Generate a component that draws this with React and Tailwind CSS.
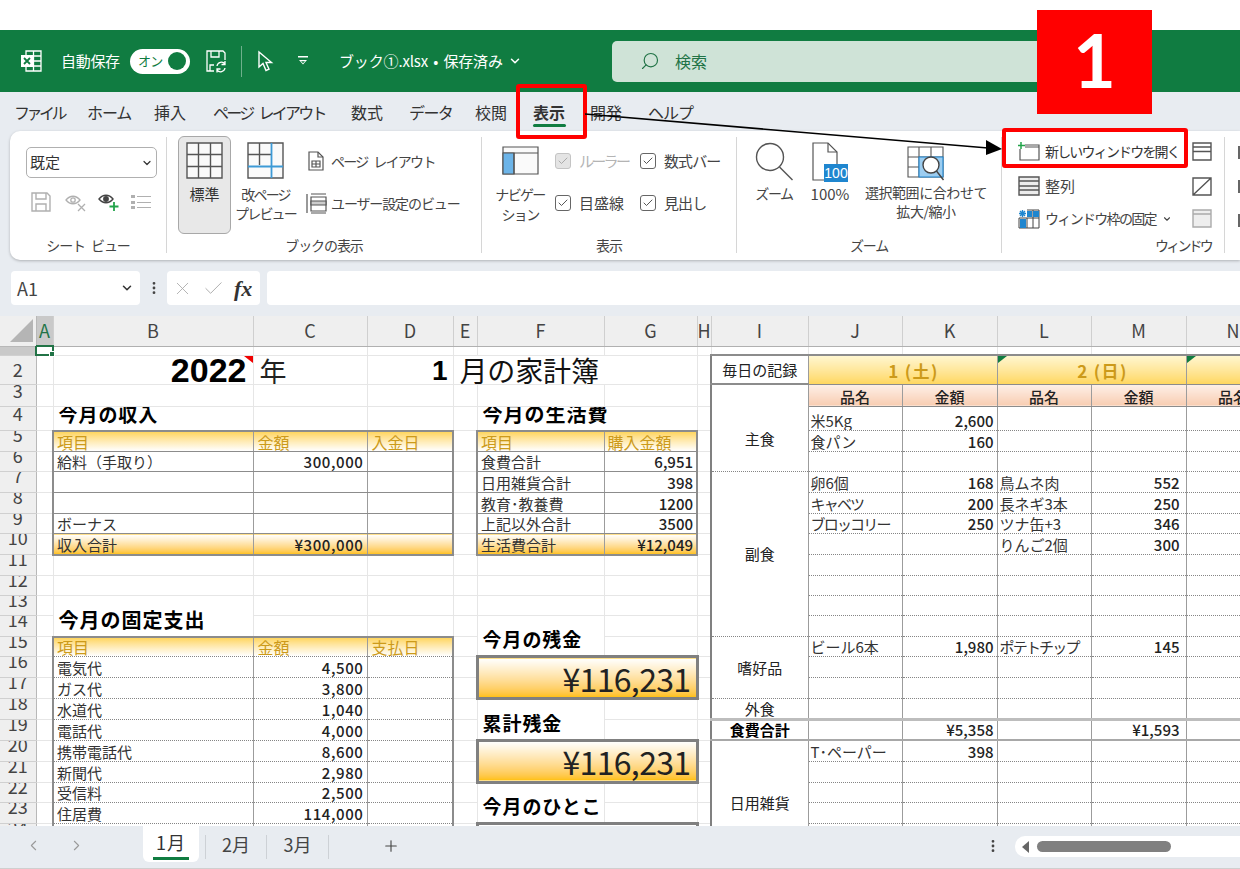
import { ChevronDown, ChevronLeft, ChevronRight, Plus, X, Check, Search, MoreVertical } from 'lucide-react';

const colWidths = ['w-[36px]', 'w-[17px]', 'w-[200px]', 'w-[114px]', 'w-[86px]', 'w-[24px]', 'w-[127px]', 'w-[93px]', 'w-[14px]', 'w-[97px]', 'w-[94px]', 'w-[95px]', 'w-[94px]', 'w-[95px]', 'w-[94px]'];
const colNames = ['A', 'B', 'C', 'D', 'E', 'F', 'G', 'H', 'I', 'J', 'K', 'L', 'M', 'N'];
const rowHeights = {
  1: 'h-[9px]', 2: 'h-[29px]', 3: 'h-[22px]', 4: 'h-[24px]', 5: 'h-[21px]', 6: 'h-[20px]', 7: 'h-[21px]', 8: 'h-[21px]', 9: 'h-[20px]',
  10: 'h-[21px]', 11: 'h-[21px]', 12: 'h-[20px]', 13: 'h-[20px]', 14: 'h-[21px]', 15: 'h-[20px]', 16: 'h-[21px]', 17: 'h-[21px]', 18: 'h-[21px]',
  19: 'h-[20px]', 20: 'h-[21px]', 21: 'h-[21px]', 22: 'h-[20px]', 23: 'h-[21px]', 24: 'h-[21px]', 25: 'h-[21px]', 26: 'h-[21px]',
};
const rowLabel = { 2: 'h-[27px] leading-[26px]', 3: 'h-[20px] leading-[11px]', 4: 'h-[23px] leading-[13px]' };

// cell borders
const gl = 'border-r border-b border-r-[#e6e6e6] border-b-[#e6e6e6]';
const vert = 'border-r border-r-[#9c9c9c]';
const solidB = 'border-b border-b-[#8c8c8c]';
const dotB = 'border-b border-b-[#858585] [border-bottom-style:dotted]';
const frameL = 'border-l-2 border-l-[#8c8c8c]';
const frameR = 'border-r-2 border-r-[#8c8c8c]';
const frameT = 'border-t-2 border-t-[#8c8c8c]';
const frameB = 'border-b-2 border-b-[#8c8c8c]';
const headBg = 'bg-linear-to-b from-[#ffd55c] to-white text-[#cc9a1a] text-[16px]';
const totalBg = 'bg-linear-to-b from-white to-[#ffc000]';
const num = 'text-right font-medium text-[#222]';
const tightNames = ['キャベツ', 'ブロッコリー', 'ポテトチップ'];

function Td({ cls = gl, children, colSpan, rowSpan }) {
  return (
    <td colSpan={colSpan} rowSpan={rowSpan} className={`relative p-0 overflow-hidden whitespace-nowrap align-bottom leading-[18px] ${cls}`}>
      {children}
    </td>
  );
}

const income = { 6: ['給料（手取り）', '300,000'], 7: ['', ''], 8: ['', ''], 9: ['ボーナス', ''] };
const fixed = {
  16: ['電気代', '4,500'], 17: ['ガス代', '3,800'], 18: ['水道代', '1,040'], 19: ['電話代', '4,000'],
  20: ['携帯電話代', '8,600'], 21: ['新聞代', '2,980'], 22: ['受信料', '2,500'], 23: ['住居費', '114,000'],
};
const living = { 6: ['食費合計', '6,951'], 7: ['日用雑貨合計', '398'], 8: ['教育･教養費', '1200'], 9: ['上記以外合計', '3500'] };
const daily = {
  4: ['米5Kg', '2,600', '', ''], 5: ['食パン', '160', '', ''],
  7: ['卵6個', '168', '鳥ムネ肉', '552'], 8: ['キャベツ', '200', '長ネギ3本', '250'], 9: ['ブロッコリー', '250', 'ツナ缶+3', '346'], 10: ['', '', 'りんご2個', '300'],
  15: ['ビール6本', '1,980', 'ポテトチップ', '145'], 20: ['T･ペーパー', '398', '', ''],
};

function leftCells(n) {
  if (n === 2) {
    return [
      <Td key="b" cls={`${gl} text-right text-[34px] font-bold leading-[27px] text-black font-['Liberation_Sans',sans-serif] pr-[6px]`}>
        2022
        <svg className="absolute top-0 right-0" width="9" height="7"><path d="M0 0h9v7z" fill="#f00000" /></svg>
      </Td>,
      <Td key="c" cls={`${gl} text-[27px] leading-[27px] text-[#222] pl-[6px]`}>年</Td>,
      <Td key="d" cls={`${gl} text-right text-[28px] font-bold leading-[27px] text-black font-['Liberation_Sans',sans-serif] pr-[5px]`}>1</Td>,
    ];
  }
  if (n === 4) {
    return [
      <Td key="b" cls={`${gl} text-[19px] font-bold text-black pl-[5px] pb-[5px] tracking-[0.05em]`}><span className="relative -top-[2px]">今月の収入</span></Td>,
      <Td key="c" />,
      <Td key="d" />,
    ];
  }
  if (n === 5 || n === 15) {
    const third = n === 5 ? '入金日' : '支払日';
    const under = n === 5 ? solidB : dotB;
    return [
      <Td key="b" cls={`${headBg} ${frameL} ${frameT} ${vert} ${under} pl-[3px]`}>項目</Td>,
      <Td key="c" cls={`${headBg} ${frameT} ${vert} ${under} pl-[4px]`}>金額</Td>,
      <Td key="d" cls={`${headBg} ${frameT} ${frameR} ${under} pl-[4px]`}>{third}</Td>,
    ];
  }
  if (income[n]) {
    return [
      <Td key="b" cls={`${frameL} ${vert} ${solidB} pl-[3px]`}>{income[n][0]}</Td>,
      <Td key="c" cls={`${vert} ${solidB} ${num} pr-[3px] tracking-[0.04em]`}>{income[n][1]}</Td>,
      <Td key="d" cls={`${frameR} ${solidB}`} />,
    ];
  }
  if (n === 10) {
    return [
      <Td key="b" cls={`${totalBg} ${frameL} ${frameB} ${vert} pl-[3px]`}>収入合計</Td>,
      <Td key="c" cls={`${totalBg} ${frameB} ${vert} ${num} pr-[3px] tracking-[0.04em]`}>¥300,000</Td>,
      <Td key="d" cls={`${totalBg} ${frameB} ${frameR}`} />,
    ];
  }
  if (n === 13) {
    return [
      <Td key="b" rowSpan={2} cls={`${gl} text-[20px] font-bold text-black pl-[5px] pb-[7px] tracking-[0.05em]`}>今月の固定支出</Td>,
      <Td key="c" />,
      <Td key="d" />,
    ];
  }
  if (n === 14) return [<Td key="c" />, <Td key="d" />];
  if (n >= 16) {
    const row = fixed[n] ?? ['', ''];
    return [
      <Td key="b" cls={`${frameL} ${vert} ${dotB} pl-[3px]`}>{row[0]}</Td>,
      <Td key="c" cls={`${vert} ${dotB} ${num} pr-[3px] tracking-[0.04em]`}>{row[1]}</Td>,
      <Td key="d" cls={`${frameR} ${dotB}`} />,
    ];
  }
  return [<Td key="b" />, <Td key="c" />, <Td key="d" />];
}

function Balance({ amount }) {
  return (
    <Td colSpan={2} rowSpan={2} cls={`${totalBg} border-[3px] border-[#808080] text-right pr-[5px] text-[32px] leading-[34px] tracking-[-0.02em] align-middle text-[#222]`}>
      {amount}
    </Td>
  );
}

function Heading({ text }) {
  return (
    <Td rowSpan={2} cls="border-r border-r-[#e6e6e6] text-[19px] font-bold text-black pl-[5px] pb-[7px] tracking-[0.05em]">
      {text}
    </Td>
  );
}

function midCells(n) {
  if (n === 2) return [];
  if (n === 4) return [<Td key="f" colSpan={2} cls={`${gl} text-[20px] font-bold text-black pl-[5px] pb-[5px] tracking-[0.05em]`}><span className="relative -top-[2px]">今月の生活費</span></Td>];
  if (n === 5) {
    return [
      <Td key="f" cls={`${headBg} ${frameL} ${frameT} ${vert} ${solidB} pl-[3px]`}>項目</Td>,
      <Td key="g" cls={`${headBg} ${frameT} ${frameR} ${solidB} pl-[3px]`}>購入金額</Td>,
    ];
  }
  if (living[n]) {
    return [
      <Td key="f" cls={`${frameL} ${vert} ${solidB} pl-[3px]`}>{living[n][0]}</Td>,
      <Td key="g" cls={`${frameR} ${solidB} ${num} pr-[3px]`}>{living[n][1]}</Td>,
    ];
  }
  if (n === 10) {
    return [
      <Td key="f" cls={`${totalBg} ${frameL} ${frameB} ${vert} pl-[3px]`}>生活費合計</Td>,
      <Td key="g" cls={`${totalBg} ${frameR} ${frameB} ${num} pr-[3px]`}>¥12,049</Td>,
    ];
  }
  if (n === 14) return [<Heading key="f" text="今月の残金" />, <Td key="g" />];
  if (n === 18) return [<Heading key="f" text="累計残金" />, <Td key="g" />];
  if (n === 22) return [<Heading key="f" text="今月のひとこと" />, <Td key="g" />];
  if (n === 15 || n === 19 || n === 23) return [<Td key="g" cls="border-r border-r-[#e6e6e6]" />];
  if (n === 16 || n === 20) return [<Balance key="b" amount="¥116,231" />];
  if (n === 17 || n === 21) return [];
  if (n === 24) return [<Td key="f" colSpan={2} rowSpan={3} cls="border-[3px] border-[#808080]" />];
  if (n > 24) return [];
  return [<Td key="f" />, <Td key="g" />];
}

function Corner() {
  return <svg className="absolute top-0 left-0" width="9" height="7"><path d="M0 0h9L0 7z" fill="#107c41" /></svg>;
}

function rightCells(n) {
  const frame = 'border-l-2 border-l-[#808080]';
  if (n === 1) return [<Td key="i" />, <Td key="j" />, <Td key="k" />, <Td key="l" />, <Td key="m" />, <Td key="n" />];
  if (n === 2) {
    const gold = `bg-linear-to-b from-[#fff6cf] to-[#ffd75e] ${frameT} ${vert} ${solidB} text-center font-bold text-[#cc9a1a] text-[17px] leading-[26px] tracking-[0.08em] pl-[22px]`;
    return [
      <Td key="i" cls={`${frame} ${frameT} ${vert} border-b-2 border-b-[#8c8c8c] text-center text-[#222] leading-[26px]`}>毎日の記録</Td>,
      <Td key="j" colSpan={2} cls={gold}>1 (土)</Td>,
      <Td key="l" colSpan={2} cls={gold}><Corner />2 (日)</Td>,
      <Td key="n" cls={gold}><Corner /></Td>,
    ];
  }
  if (n === 3) {
    const peach = `bg-linear-to-b from-[#fdf0e8] to-[#f8cdb2] ${vert} ${solidB} text-center text-[#222] font-medium`;
    return [
      <Td key="i" cls={`${frame} ${vert}`} />,
      <Td key="j" cls={peach}>品名</Td>,
      <Td key="k" cls={peach}>金額</Td>,
      <Td key="l" cls={peach}>品名</Td>,
      <Td key="m" cls={peach}>金額</Td>,
      <Td key="n" cls={peach}>品名</Td>,
    ];
  }
  const labels = { 4: ['主食', 3], 7: ['副食', 8], 15: ['嗜好品', 3], 18: ['外食', 1], 19: ['食費合計', 1], 20: ['日用雑貨', 6], 26: ['', 1] };
  const label = labels[n];
  const under = n === 18 ? 'border-b-[3px] border-b-[#bdbdbd]' : n === 19 ? 'border-b-2 border-b-[#a8a8a8]' : dotB;
  const row = n === 19 ? ['', '¥5,358', '', '¥1,593'] : daily[n] ?? ['', '', '', ''];
  const nameCls = (name) => `${vert} ${under} pl-[2px] ${tightNames.includes(name) ? 'tracking-[-0.12em]' : ''}`;
  const cells = [];
  if (label) {
    cells.push(
      <Td key="i" rowSpan={label[1]} cls={`${frame} ${vert} ${under} text-center ${n === 19 ? 'font-bold text-black' : 'align-middle text-[#222]'}`}>
        {label[0]}
      </Td>
    );
  }
  cells.push(
    <Td key="j" cls={nameCls(row[0])}>{row[0]}</Td>,
    <Td key="k" cls={`${vert} ${under} ${num} pr-[3px]`}>{row[1]}</Td>,
    <Td key="l" cls={nameCls(row[2])}>{row[2]}</Td>,
    <Td key="m" cls={`${vert} ${under} ${num} pr-[6px]`}>{row[3]}</Td>,
    <Td key="n" cls={`${vert} ${under}`} />
  );
  return cells;
}

function Sheet() {
  const rows = Array.from({ length: 26 }, (_, i) => i + 1);
  return (
    <div className="h-[510px] overflow-hidden bg-white">
      <table className="table-fixed border-collapse w-[1280px] text-[15px] text-[#333]">
        <colgroup>
          {colWidths.map((w, i) => <col key={i} className={w} />)}
        </colgroup>
        <tbody>
          <tr className="h-[30px]">
            <th className="relative p-0 bg-[#efefef] border-r border-b border-[#b8b8b8]">
              <svg className="absolute left-[10px] top-[3px]" width="23" height="23"><path d="M23 0v23H0z" fill="#b5b5b5" /></svg>
            </th>
            {colNames.map((c) => (
              <th
                key={c}
                className={`p-0 font-normal text-[18px] border-r border-b border-r-[#cfcfcf] border-b-[#b0b0b0] ${c === 'A' ? 'bg-[#c9c9c9] text-[#217346]' : 'bg-[#efefef] text-[#444]'}`}
              >
                {c}
              </th>
            ))}
          </tr>
          {rows.map((n) => (
            <tr key={n} className={rowHeights[n]}>
              <td className={`p-0 align-top text-center text-[18px] text-[#444] border-r border-b border-r-[#b8b8b8] border-b-[#d0d0d0] ${n === 1 ? 'bg-[#c9c9c9]' : 'bg-[#efefef]'}`}>
                {n > 1 && <div className={`overflow-hidden ${rowLabel[n] ?? 'h-[18px] leading-[6px]'}`}>{n}</div>}
              </td>
              {n === 1 ? (
                <td className="relative p-0 border-2 border-[#217346]">
                  <span className="absolute -right-[3px] -bottom-[3px] w-[6px] h-[6px] bg-[#217346] border border-white" />
                </td>
              ) : (
                <Td />
              )}
              {leftCells(n)}
              {n === 2 ? (
                <Td colSpan={3} cls={`${gl} text-[28px] leading-[27px] text-[#111] pl-[6px] tracking-[-0.005em]`}>月の家計簿</Td>
              ) : (
                <Td />
              )}
              {midCells(n)}
              <Td />
              {rightCells(n)}
            </tr>
          ))}
        </tbody>
      </table>
    </div>
  );
}

function TitleBar() {
  return (
    <div className="h-[62px] bg-[#107c41] flex items-center text-white text-[15px]">
      <svg className="ml-[20px] shrink-0" width="22" height="22" viewBox="0 0 22 22" fill="none" stroke="white" strokeWidth="1.3">
        <path d="M6 1h15v20H6z" />
        <path d="M13.5 1v20M6 6h15M6 11h15M6 16h15" />
        <rect x="1" y="5" width="12" height="12" fill="white" stroke="none" />
        <path d="M4 8l6 6M10 8l-6 6" stroke="#107c41" strokeWidth="1.8" />
      </svg>
      <span className="ml-[19px] w-[61px] tracking-[-0.02em]">自動保存</span>
      <div className="ml-[8px] w-[60px] h-[25px] rounded-full bg-white flex items-center justify-between pl-[8px] pr-[4px]">
        <span className="text-[#107c41] text-[13px] tracking-[-0.05em]">オン</span>
        <span className="w-[18px] h-[18px] rounded-full bg-[#107c41]" />
      </div>
      <svg className="ml-[15px] shrink-0" width="22" height="24" viewBox="0 0 22 24" fill="none" stroke="white" strokeWidth="1.3">
        <path d="M9 22H2V2h16l2 2v7" />
        <path d="M6 2v6h8V2M5 22v-6h4" />
        <path d="M12 17a4.5 4.5 0 0 1 8-2M20 19a4.5 4.5 0 0 1-8 2M20 12v3.5h-3.5M12 23.5V20h3.5" />
      </svg>
      <div className="ml-[14px] w-px h-[31px] bg-[#6fb08c]" />
      <svg className="ml-[15px] shrink-0" width="17" height="22" viewBox="0 0 17 22" fill="none" stroke="white" strokeWidth="1.4">
        <path d="M2 2v15l4-3.5 3 7 3-1.3-3-6.7h5.500z" />
      </svg>
      <svg className="ml-[24px] shrink-0" width="10" height="10" viewBox="0 0 10 10" fill="white">
        <path d="M0 0h10v1.5H0z" />
        <path d="M1 4h8L5 8.5zM3 5.2l2 2 2-2z" />
      </svg>
      <span className="ml-[31px] w-[163px] tracking-[-0.01em] [word-spacing:2px] whitespace-nowrap">ブック①.xlsx • 保存済み</span>
      <ChevronDown className="ml-[6px]" size={14} strokeWidth={2.6} />
      <div className="ml-[90px] w-[490px] h-[41px] rounded-[5px] bg-[#cfe3d7] flex items-center text-[#217346]">
        <Search className="ml-[28px] -scale-x-100" size={20} strokeWidth={1.4} />
        <span className="ml-[15px] text-[16px]">検索</span>
      </div>
    </div>
  );
}

function Tabs() {
  return (
    <div className="h-[39px] flex items-center gap-6 pl-[14px] text-[16px] text-[#333] whitespace-nowrap">
      <span className="w-[49px] tracking-[-0.22em]">ファイル</span>
      <span className="w-[43px] tracking-[-0.07em]">ホーム</span>
      <span className="w-[33px]">挿入</span>
      <span className="w-[112px] ml-[2px] tracking-[-0.17em] [word-spacing:5px]">ページ レイアウト</span>
      <span className="w-[34px] ml-[2px]">数式</span>
      <span className="w-[42px] tracking-[-0.1em]">データ</span>
      <span className="w-[34px]">校閲</span>
      <span className="relative w-[33px] font-bold">
        表示
        <span className="absolute left-0 right-0 top-[24px] h-[3px] rounded bg-[#107c41]" />
      </span>
      <span className="w-[34px]">開発</span>
      <span className="w-[42px] tracking-[-0.06em]">ヘルプ</span>
    </div>
  );
}

function Group({ className, label, labelClass = 'text-center tracking-[-0.08em]', children }) {
  return (
    <div className={`h-[116px] mt-[6px] border-r border-[#d6d6d6] flex flex-col shrink-0 ${className}`}>
      <div className="h-[98px] shrink-0 flex">{children}</div>
      <div className={`mt-[2px] text-[14px] leading-[17px] text-[#444] ${labelClass}`}>{label}</div>
    </div>
  );
}

function CheckItem({ label, disabled, className, textClass }) {
  return (
    <div className={`flex items-center h-[20px] ${className}`}>
      <span className={`w-[16px] h-[16px] rounded-[3px] border flex items-center justify-center ${disabled ? 'bg-[#e4e4e4] border-[#c4c4c4] text-[#a4a4a4]' : 'border-[#666] text-[#444]'}`}>
        <Check size={12} strokeWidth={1.8} />
      </span>
      <span className={`ml-[8px] text-[15px] whitespace-nowrap ${textClass} ${disabled ? 'text-[#b4b4b4]' : 'text-[#444]'}`}>{label}</span>
    </div>
  );
}

function Ribbon() {
  return (
    <div className="ml-[10px] h-[129px] rounded-l-[10px] bg-white shadow-[0_1px_3px_rgba(0,0,0,0.25)] flex overflow-hidden">
      <Group className="w-[157px]" label="シート ビュー" labelClass="text-center tracking-[-0.08em] [word-spacing:4px]">
        <div className="ml-[16px] mt-[10px]">
          <div className="w-[131px] h-[31px] rounded-[5px] border border-[#b0b0b0] flex items-center justify-between pl-[3px] pr-[3px] text-[15px] text-[#333]">
            既定
            <ChevronDown size={12} strokeWidth={2.4} />
          </div>
          <div className="mt-[14px] flex items-center">
            <svg className="ml-[5px]" width="20" height="20" viewBox="0 0 20 20" fill="none" stroke="#b0b0b0" strokeWidth="1.4">
              <path d="M1 1h15l3 3v15H1z" /><path d="M5 1v6h10V1M5 19v-7h10v7" />
            </svg>
            <svg className="ml-[14px]" width="21" height="19" viewBox="0 0 21 19" fill="none" stroke="#b0b0b0" strokeWidth="1.3">
              <path d="M1 7c4-5 10-5 14 0-4 5-10 5-14 0z" /><circle cx="8" cy="7" r="2.2" /><path d="M13 11l7 7M20 11l-7 7" />
            </svg>
            <svg className="ml-[12px]" width="22" height="20" viewBox="0 0 22 20" fill="none" stroke="#444" strokeWidth="1.4">
              <path d="M1 7c4-5 10-5 14 0-4 5-10 5-14 0z" /><circle cx="8" cy="7" r="2.2" fill="#444" /><path d="M16 10v9M11.5 14.500h9" stroke="#22a34a" strokeWidth="1.8" />
            </svg>
            <svg className="ml-[11px]" width="20" height="16" viewBox="0 0 20 16" fill="#b0b0b0">
              <path d="M0 1h4v3H0zM0 7h4v3H0zM0 12h4v3H0zM6 2h14v1H6zM6 8h14v1H6zM6 13h14v1H6z" />
            </svg>
          </div>
        </div>
      </Group>

      <Group className="w-[315px]" label="ブックの表示">
        <div className="ml-[11px] -mt-px w-[53px] h-[98px] rounded-[6px] bg-[#e8e8e8] border border-[#a8a8a8] flex flex-col items-center pt-[5px]">
          <svg width="37" height="37" viewBox="0 0 37 37" fill="#fafafa" stroke="#555" strokeWidth="1.4">
            <path d="M1 1h35v35H1z" /><path d="M12.500 1v35M24.500 1v35M1 12.500h35M1 24.500h35" fill="none" />
          </svg>
          <span className="mt-[5px] text-[15px] text-[#333] leading-[19px]">標準</span>
        </div>
        <div className="ml-[5px] w-[59px] flex flex-col items-center pt-[5px]">
          <svg width="37" height="37" viewBox="0 0 37 37" fill="#fafafa" stroke="#555" strokeWidth="1.4">
            <path d="M1 1h35v35H1z" /><path d="M12.500 1v22M1 12.500h23" fill="none" /><path d="M24.500 1v35M1 24.500h35" fill="none" stroke="#3d9ad6" strokeWidth="1.8" />
          </svg>
          <span className="mt-[6px] text-[14px] text-[#444] leading-[19px] text-center tracking-[-0.13em] whitespace-nowrap">改ページ<br />プレビュー</span>
        </div>
        <div className="ml-[11px] flex flex-col">
          <div className="mt-[13px] flex items-center h-[22px]">
            <svg className="ml-[2px]" width="16" height="20" viewBox="0 0 16 20" fill="none" stroke="#555" strokeWidth="1.2">
              <path d="M1 1h9l5 5v13H1z" /><path d="M10 1v5h5M4 10h8v6H4zM8 10v6M4 13h8" />
            </svg>
            <span className="ml-[7px] text-[14px] text-[#444] tracking-[-0.12em] [word-spacing:4px] whitespace-nowrap">ページ レイアウト</span>
          </div>
          <div className="mt-[20px] flex items-center h-[22px]">
            <svg width="21" height="21" viewBox="0 0 21 21" fill="none" stroke="#555" strokeWidth="1.2">
              <path d="M1 1v19M5 1h15M5 20h15M5 4h15v14H5z" /><path d="M5 8h15v4H5z" fill="#ccc" />
            </svg>
            <span className="ml-[4px] text-[14px] text-[#444] tracking-[-0.08em] whitespace-nowrap">ユーザー設定のビュー</span>
          </div>
        </div>
      </Group>

      <Group className="w-[255px]" label="表示">
        <div className="ml-[13px] w-[50px] flex flex-col items-center pt-[9px]">
          <svg width="37" height="29" viewBox="0 0 37 29" fill="none" stroke="#555" strokeWidth="1.2">
            <path d="M1 1h35v27H1z" fill="#fafafa" /><path d="M1 7h35" /><path d="M1 7h11v21H1z" fill="#6cb4e8" stroke="#555" /><path d="M12 7v21" />
          </svg>
          <span className="mt-[9px] text-[14px] text-[#444] leading-[20px] text-center tracking-[-0.12em] whitespace-nowrap">ナビゲー<br />ション</span>
        </div>
        <div className="ml-[10px] w-[85px] flex flex-col">
          <CheckItem className="mt-[14px]" label="ルーラー" textClass="tracking-[-0.18em]" disabled />
          <CheckItem className="mt-[22px]" label="目盛線" />
        </div>
        <div className="flex flex-col">
          <CheckItem className="mt-[14px]" label="数式バー" textClass="tracking-[-0.06em]" />
          <CheckItem className="mt-[22px]" label="見出し" textClass="tracking-[-0.06em]" />
        </div>
      </Group>

      <Group className="w-[265px]" label="ズーム">
        <div className="ml-[13px] w-[48px] flex flex-col items-center pt-[5px]">
          <svg width="40" height="39" viewBox="0 0 40 39" fill="none" stroke="#555" strokeWidth="1.4">
            <circle cx="16" cy="15" r="13.500" /><path d="M25.500 25l13 13" />
          </svg>
          <span className="mt-[3px] text-[14px] text-[#444] leading-[19px] tracking-[-0.1em]">ズーム</span>
        </div>
        <div className="ml-[10px] w-[44px] flex flex-col items-center pt-[5px]">
          <svg width="36" height="40" viewBox="0 0 36 40" fill="none" stroke="#555" strokeWidth="1.2">
            <path d="M1 1h15l9 9v28H1z" fill="white" /><path d="M16 1v9h9" />
            <rect x="12" y="22" width="24" height="18" fill="#1f86cf" stroke="none" />
            <text x="24" y="36" fill="white" stroke="none" textAnchor="middle" fontSize="14" fontFamily="Liberation Sans">100</text>
          </svg>
          <span className="mt-[2px] text-[15px] text-[#444] leading-[19px]">100%</span>
        </div>
        <div className="ml-[10px] w-[128px] flex flex-col items-center pt-[9px]">
          <svg width="38" height="35" viewBox="0 0 38 35" fill="none" stroke="#555" strokeWidth="1.1">
            <path d="M1 1h35v30H1zM12 1v30M24 1v30M1 11h35M1 21h35" />
            <path d="M12 11h24v20H12z" fill="#9ccdf0" stroke="#1f86cf" />
            <circle cx="24" cy="19" r="8" fill="white" stroke="#444" strokeWidth="1.4" />
            <path d="M29.500 25l7 9" stroke="#444" strokeWidth="1.4" />
          </svg>
          <span className="mt-[2px] text-[14px] text-[#444] leading-[19px] text-center tracking-[-0.03em] whitespace-nowrap">選択範囲に合わせて<br />拡大/縮小</span>
        </div>
      </Group>

      <Group className="w-[223px]" label="ウィンドウ" labelClass="text-right pr-[13px] tracking-[-0.2em]">
        <div className="ml-[16px] w-[174px] flex flex-col">
          <div className="h-[29px] mb-[4px] flex items-center">
            <svg width="22" height="19" viewBox="0 0 22 19" fill="none" stroke="#555" strokeWidth="1.2">
              <path d="M7 3h14v15H2V7M7 3h14v2H7" /><path d="M3 0v7M0 3.500h7" stroke="#22a34a" strokeWidth="1.500" />
            </svg>
            <span className="ml-[5px] text-[14px] text-[#333] tracking-[-0.13em] whitespace-nowrap">新しいウィンドウを開く</span>
          </div>
          <div className="h-[33px] flex items-center">
            <svg width="22" height="20" viewBox="0 0 22 20" fill="#ececec" stroke="#555" strokeWidth="1.4">
              <path d="M1 1h20v18H1z" /><path d="M1 5h20M1 10h20M1 14h20" />
            </svg>
            <span className="ml-[5px] text-[15px] text-[#444]">整列</span>
          </div>
          <div className="h-[33px] flex items-center">
            <svg width="22" height="20" viewBox="0 0 22 20" fill="none" stroke="#1f86cf" strokeWidth="1.4">
              <path d="M2 2l5 5M7 2L2 7M4.500 1v7M1 4.500h7" />
              <path d="M9 1h12v18H1V9h20M9 9v10M15 1v18" stroke="#444" strokeWidth="1" />
              <path d="M9 2h5v6H9zM15 2h6v6h-6zM2 10h6v9H2z" fill="#1f86cf" stroke="none" />
            </svg>
            <span className="ml-[5px] text-[14px] text-[#444] tracking-[-0.12em] whitespace-nowrap">ウィンドウ枠の固定</span>
            <ChevronDown className="ml-[6px] text-[#444]" size={10} strokeWidth={2.6} />
          </div>
        </div>
        <div className="flex flex-col">
          <div className="h-[29px] mb-[4px] flex items-center">
            <svg width="20" height="19" viewBox="0 0 20 19" fill="none" stroke="#555" strokeWidth="1.4"><path d="M1 1h18v17H1zM1 9.500h18M1 5h18" /></svg>
          </div>
          <div className="h-[33px] flex items-center">
            <svg width="20" height="19" viewBox="0 0 20 19" fill="none" stroke="#555" strokeWidth="1.4"><path d="M1 1h18v17H1zM1 18L19 1" /></svg>
          </div>
          <div className="h-[33px] flex items-center">
            <svg width="20" height="19" viewBox="0 0 20 19" fill="#eee" stroke="#aaa" strokeWidth="1.4"><path d="M1 1h18v17H1zM1 5h18" /></svg>
          </div>
        </div>
      </Group>

      <div className="pl-[13px] pt-[15px] flex flex-col gap-[21px]">
        <span className="w-[2px] h-[13px] bg-[#666]" />
        <span className="w-[2px] h-[13px] bg-[#666]" />
        <span className="w-[2px] h-[13px] bg-[#666]" />
      </div>
    </div>
  );
}

function FormulaBar() {
  return (
    <div className="h-[56px] pt-[11px] pl-[11px] flex text-[#444]">
      <div className="w-[129px] h-[34px] rounded-[4px] bg-white flex items-center justify-between pl-[6px] pr-[6px] text-[18px]">
        A1
        <ChevronDown size={14} strokeWidth={2.6} className="text-[#333]" />
      </div>
      <div className="w-[27px] h-[34px] flex items-center justify-center">
        <MoreVertical size={16} strokeWidth={2.2} />
      </div>
      <div className="w-[93px] h-[34px] rounded-[4px] bg-white flex items-center pl-[5px] gap-[9px]">
        <X size={21} strokeWidth={1} className="text-[#aaa]" />
        <Check size={23} strokeWidth={1} className="text-[#aaa]" />
        <span className="font-['Liberation_Serif',serif] italic font-bold text-[22px] text-[#333]">fx</span>
      </div>
      <div className="ml-[7px] flex-1 h-[34px] rounded-l-[4px] bg-white" />
    </div>
  );
}

function SheetTabs() {
  return (
    <div className="h-[43px] bg-[#e8ecf1] border-b border-[#cfcfcf] flex items-start text-[#444] relative">
      <ChevronLeft className="ml-[25px] mt-[11px] text-[#999]" size={17} strokeWidth={1.5} />
      <ChevronRight className="ml-[26px] mt-[11px] text-[#999]" size={17} strokeWidth={1.5} />
      <div className="ml-[58px] w-[56px] h-[36px] rounded-b-[6px] bg-white flex flex-col items-center text-[18px] leading-[28px]">
        <span className="mt-[2px] text-[#333] tracking-[0.05em]">1月</span>
        <span className="mt-[1px] w-[36px] h-[3px] bg-[#107c41]" />
      </div>
      <div className="ml-[6px] mt-[9px] w-px h-[24px] bg-[#cdd1d6]" />
      <span className="w-[60px] mt-[5px] text-center text-[18px]">2月</span>
      <div className="mt-[9px] w-px h-[24px] bg-[#cdd1d6]" />
      <span className="w-[61px] mt-[5px] text-center text-[18px]">3月</span>
      <div className="mt-[9px] w-px h-[24px] bg-[#cdd1d6]" />
      <Plus className="ml-[53px] mt-[11px]" size={18} strokeWidth={1.5} />
      <MoreVertical className="ml-[585px] mt-[12px]" size={16} strokeWidth={2.2} />
      <div className="ml-[14px] mt-[10px] flex-1 h-[21px] rounded-l-[10px] bg-white flex items-center pl-[7px]">
        <svg width="7" height="12" viewBox="0 0 7 12" fill="#666"><path d="M7 0v12L0 6z" /></svg>
        <span className="ml-[8px] w-[134px] h-[11px] rounded-full bg-[#808080]" />
      </div>
    </div>
  );
}

export default function App() {
  return (
    <div className="relative w-[1240px] h-[869px] overflow-hidden bg-white font-['Noto_Sans_CJK_JP','Noto_Sans',sans-serif]">
      <div className="h-[30px]" />
      <TitleBar />
      <div className="bg-[#e8ecf1]">
        <Tabs />
        <Ribbon />
        <FormulaBar />
      </div>
      <Sheet />
      <SheetTabs />

      {/* annotation overlays */}
      <div className="absolute left-[1037px] top-[10px] w-[115px] h-[104px] bg-[#ff0000] flex items-center justify-center pb-[4px] text-white text-[74px] font-bold leading-none font-['Lato',sans-serif]">
        1
      </div>
      <div className="absolute left-[516px] top-[84px] w-[71px] h-[55px] rounded-[3px] border-4 border-[#ff0000]" />
      <div className="absolute left-[1002px] top-[128px] w-[186px] h-[40px] rounded-[3px] border-4 border-[#ff0000]" />
      <svg className="absolute left-0 top-0 pointer-events-none" width="1240" height="869">
        <path d="M585 114L988 148" stroke="black" strokeWidth="1.6" />
        <path d="M1002 149L986 140v15z" fill="black" />
      </svg>
    </div>
  );
}
